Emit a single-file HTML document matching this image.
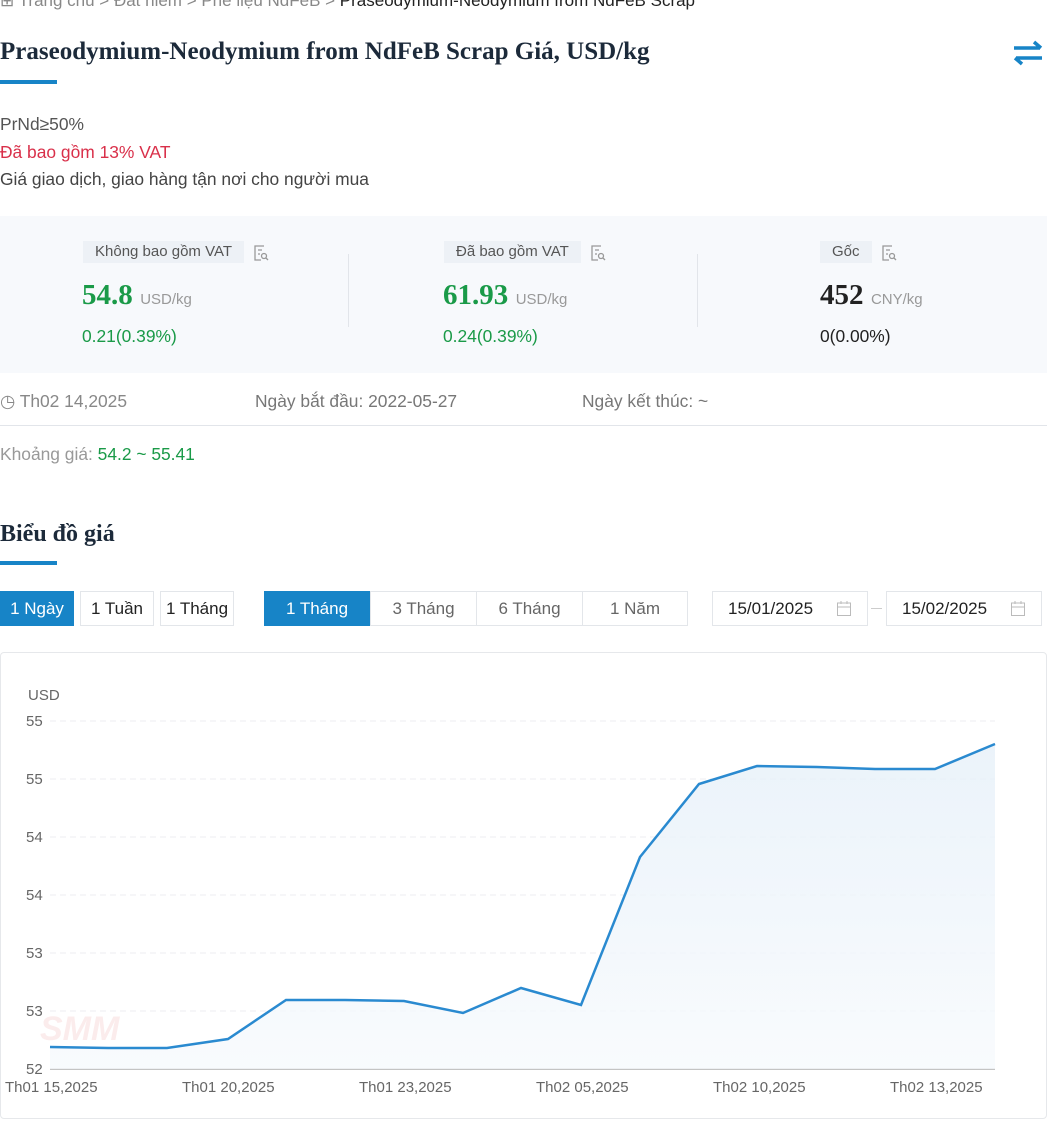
<!DOCTYPE html>
<html><head><meta charset="utf-8"><style>
body{margin:0;width:1047px;height:1136px;overflow:hidden;background:#fff;font-family:"Liberation Sans",sans-serif;color:#333;position:relative}
.a{position:absolute;white-space:nowrap}
.serif{font-family:"Liberation Serif",serif;font-weight:bold}
.tag{background:#edf1f6;color:#555;font-size:15px;padding:3px 12px;height:16px;line-height:16px}
.btn{position:absolute;top:591px;line-height:33px;border:1px solid #e3e6ea;font-size:17px;text-align:center;color:#222;box-sizing:border-box;height:35px}
.on{background:#1784c7;color:#fff;border-color:#1784c7}
.g{color:#1a9a48}
.t{font-size:17.4px}
</style></head><body>
<div class="a" style="top:-9px;left:0;font-size:17px;color:#888">⊞ Trang chủ &gt; Đất hiếm &gt; Phế liệu NdFeB &gt; <span style="color:#222">Praseodymium-Neodymium from NdFeB Scrap</span></div>
<div class="a serif" style="top:38px;left:0;font-size:25px;color:#1c2a3a">Praseodymium-Neodymium from NdFeB Scrap Giá, USD/kg</div>
<div class="a" style="top:80px;left:0;width:57px;height:4px;background:#1784c7"></div>
<svg class="a" style="left:1012px;top:40px" width="32" height="26" viewBox="0 0 32 26"><path d="M2 8H28M22 2L29 8" stroke="#1784c7" stroke-width="3.5" fill="none"/><path d="M30 18H4M10 24L3 18" stroke="#1784c7" stroke-width="3.5" fill="none"/></svg>
<div class="a t" style="top:114px;left:0;color:#555">PrNd≥50%</div>
<div class="a t" style="top:142px;left:0;color:#d9304a">Đã bao gồm 13% VAT</div>
<div class="a t" style="top:169px;left:0;color:#444">Giá giao dịch, giao hàng tận nơi cho người mua</div>
<div class="a" style="top:216px;left:0;width:1047px;height:157px;background:#f7f9fc"></div>
<div class="a" style="left:348px;top:254px;width:1px;height:73px;background:#e2e5ea"></div>
<div class="a" style="left:697px;top:254px;width:1px;height:73px;background:#e2e5ea"></div>
<div class="a tag" style="left:83px;top:241px">Không bao gồm VAT</div>
<div class="a tag" style="left:444px;top:241px">Đã bao gồm VAT</div>
<div class="a tag" style="left:820px;top:241px">Gốc</div>
<svg class="a" style="left:253px;top:244px" width="16" height="18" viewBox="0 0 16 18"><path d="M11 2H2V16H8M5 6H9M5 10H7" stroke="#999" stroke-width="1.3" fill="none"/><circle cx="11" cy="12" r="2.5" stroke="#999" stroke-width="1.3" fill="none"/><path d="M13 14L15 16" stroke="#999" stroke-width="1.3"/></svg>
<svg class="a" style="left:590px;top:244px" width="16" height="18" viewBox="0 0 16 18"><path d="M11 2H2V16H8M5 6H9M5 10H7" stroke="#999" stroke-width="1.3" fill="none"/><circle cx="11" cy="12" r="2.5" stroke="#999" stroke-width="1.3" fill="none"/><path d="M13 14L15 16" stroke="#999" stroke-width="1.3"/></svg>
<svg class="a" style="left:881px;top:244px" width="16" height="18" viewBox="0 0 16 18"><path d="M11 2H2V16H8M5 6H9M5 10H7" stroke="#999" stroke-width="1.3" fill="none"/><circle cx="11" cy="12" r="2.5" stroke="#999" stroke-width="1.3" fill="none"/><path d="M13 14L15 16" stroke="#999" stroke-width="1.3"/></svg>
<div class="a" style="left:82px;top:279px"><span class="serif g" style="font-size:29px">54.8</span> <span style="font-size:15px;color:#999;margin-left:3px">USD/kg</span></div>
<div class="a" style="left:443px;top:279px"><span class="serif g" style="font-size:29px">61.93</span> <span style="font-size:15px;color:#999;margin-left:3px">USD/kg</span></div>
<div class="a" style="left:820px;top:279px"><span class="serif" style="font-size:29px;color:#222">452</span> <span style="font-size:15px;color:#999;margin-left:3px">CNY/kg</span></div>
<div class="a g t" style="left:82px;top:326px">0.21(0.39%)</div>
<div class="a g t" style="left:443px;top:326px">0.24(0.39%)</div>
<div class="a t" style="left:820px;top:326px;color:#222">0(0.00%)</div>
<div class="a t" style="left:0;top:391px;color:#888">◷ Th02 14,2025</div>
<div class="a t" style="left:255px;top:391px;color:#777">Ngày bắt đầu: 2022-05-27</div>
<div class="a t" style="left:582px;top:391px;color:#777">Ngày kết thúc: ~</div>
<div class="a" style="left:0;top:425px;width:1047px;height:1px;background:#e2e5ea"></div>
<div class="a t" style="left:0;top:444px;color:#999">Khoảng giá: <span class="g">54.2 ~ 55.41</span></div>
<div class="a serif" style="left:0;top:521px;font-size:24px;color:#1c2a3a">Biểu đồ giá</div>
<div class="a" style="top:561px;left:0;width:57px;height:4px;background:#1784c7"></div>
<div class="btn on" style="left:0;width:74px">1 Ngày</div>
<div class="btn" style="left:80px;width:74px">1 Tuần</div>
<div class="btn" style="left:160px;width:74px">1 Tháng</div>
<div class="btn on" style="left:264px;width:106px">1 Tháng</div>
<div class="btn" style="left:370px;width:107px;color:#666">3 Tháng</div>
<div class="btn" style="left:476px;width:107px;color:#666">6 Tháng</div>
<div class="btn" style="left:582px;width:106px;color:#666">1 Năm</div>
<div class="btn" style="left:712px;width:156px;text-align:left;padding-left:15px">15/01/2025</div>
<div class="a" style="left:871px;top:608px;width:11px;height:1px;background:#ccc"></div>
<div class="btn" style="left:886px;width:156px;text-align:left;padding-left:15px">15/02/2025</div>
<svg class="a" style="left:836px;top:600px" width="16" height="17" viewBox="0 0 16 17"><rect x="1.5" y="3" width="13" height="12.5" stroke="#bbb" fill="none"/><path d="M1.5 7H14.5M5 1V4M11 1V4" stroke="#bbb"/></svg>
<svg class="a" style="left:1010px;top:600px" width="16" height="17" viewBox="0 0 16 17"><rect x="1.5" y="3" width="13" height="12.5" stroke="#bbb" fill="none"/><path d="M1.5 7H14.5M5 1V4M11 1V4" stroke="#bbb"/></svg>
<div class="a" style="left:0;top:652px;width:1045px;height:465px;border:1px solid #e6e8eb;border-radius:4px"></div>
<svg class="a" style="left:0;top:0" width="1047" height="1136">
<g stroke="#eceef1" stroke-dasharray="6 4"><line x1="50" y1="721" x2="995" y2="721"/><line x1="50" y1="779" x2="995" y2="779"/><line x1="50" y1="837" x2="995" y2="837"/><line x1="50" y1="895" x2="995" y2="895"/><line x1="50" y1="953" x2="995" y2="953"/><line x1="50" y1="1011" x2="995" y2="1011"/></g>
<line x1="50" y1="1069" x2="995" y2="1069" stroke="#888"/>
<text x="40" y="1040" font-family="Liberation Sans" font-weight="bold" font-style="italic" font-size="34" fill="#fbecec">SMM</text>
<defs><linearGradient id="f" x1="0" y1="0" x2="0" y2="1"><stop offset="0" stop-color="#e6f0f9"/><stop offset="1" stop-color="#f7fafd"/></linearGradient></defs>
<path d="M50 1047L108 1048L167 1048L228 1039L286 1000L345 1000L404 1001L463 1013L521 988L581 1005L640 857L699 784L757 766L817 767L875 769L935 769L995 744L995 1069L50 1069Z" fill="url(#f)" opacity=".8"/>
<path d="M50 1047L108 1048L167 1048L228 1039L286 1000L345 1000L404 1001L463 1013L521 988L581 1005L640 857L699 784L757 766L817 767L875 769L935 769L995 744" stroke="#2a8ad0" stroke-width="2.5" fill="none"/>
<g font-family="Liberation Sans" font-size="15" fill="#666">
<text x="28" y="700">USD</text>
<text x="26" y="726">55</text><text x="26" y="784">55</text><text x="26" y="842">54</text><text x="26" y="900">54</text><text x="26" y="958">53</text><text x="26" y="1016">53</text><text x="26" y="1074">52</text>
<text x="5" y="1092">Th01 15,2025</text><text x="182" y="1092">Th01 20,2025</text><text x="359" y="1092">Th01 23,2025</text><text x="536" y="1092">Th02 05,2025</text><text x="713" y="1092">Th02 10,2025</text><text x="890" y="1092">Th02 13,2025</text>
</g></svg>
</body></html>
